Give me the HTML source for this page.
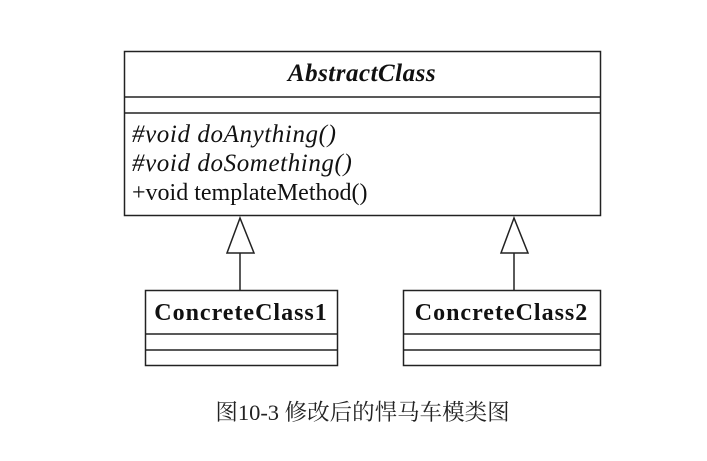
<!DOCTYPE html>
<html><head><meta charset="utf-8"><style>
body{margin:0;width:707px;height:461px;background:#fff;position:relative;overflow:hidden;font-family:"Liberation Serif","Noto Serif CJK SC",serif;color:#111}
.t{position:absolute;white-space:nowrap;line-height:1}
</style></head><body>
<svg width="707" height="461" style="position:absolute;left:0;top:0">
<g fill="none" stroke="#222" stroke-width="1.5">
<rect x="124.5" y="51.5" width="476" height="164"/>
<line x1="124" y1="97" x2="600" y2="97"/>
<line x1="124" y1="113" x2="600" y2="113"/>
<polygon points="240,218 227,253 254,253" fill="#fff"/>
<line x1="240" y1="253" x2="240" y2="290"/>
<polygon points="514,218 501,253 528,253" fill="#fff"/>
<line x1="514" y1="253" x2="514" y2="290"/>
<rect x="145.5" y="290.5" width="192" height="75"/>
<line x1="145" y1="334" x2="337" y2="334"/>
<line x1="145" y1="350" x2="337" y2="350"/>
<rect x="403.5" y="290.5" width="197" height="75"/>
<line x1="403" y1="334" x2="600" y2="334"/>
<line x1="403" y1="350" x2="600" y2="350"/>
</g></svg>
<div class="t" style="left:124px;width:476px;text-align:center;top:61px;font-size:25px;font-weight:bold;font-style:italic;letter-spacing:0.5px">AbstractClass</div>
<div class="t" style="left:132px;top:122px;font-size:25px;font-style:italic;letter-spacing:0.6px">#void doAnything()</div>
<div class="t" style="left:132px;top:151px;font-size:25px;font-style:italic;letter-spacing:0.6px">#void doSomething()</div>
<div class="t" style="left:132px;top:181px;font-size:24px">+void templateMethod()</div>
<div class="t" style="left:145px;width:192px;text-align:center;top:301px;font-size:24px;font-weight:bold;letter-spacing:1px">ConcreteClass1</div>
<div class="t" style="left:403px;width:197px;text-align:center;top:301px;font-size:24px;font-weight:bold;letter-spacing:1px">ConcreteClass2</div>
<div class="t" style="left:0;width:725px;text-align:center;top:402px;font-size:22.5px;color:#222">图10-3 修改后的悍马车模类图</div>
</body></html>
